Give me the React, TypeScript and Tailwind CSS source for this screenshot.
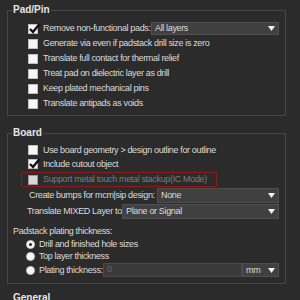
const font = { fontFamily: '"Liberation Sans", Arial, sans-serif' }

function Check({ checked, disabled }: { checked?: boolean; disabled?: boolean }) {
  return (
    <span
      className={`relative inline-block w-[10px] h-[10px] shrink-0 border ${
        disabled ? 'bg-[#d8d8d8] border-[#9a9a9a]' : 'bg-[#f7f7f7] border-[#bdbdbd]'
      }`}
    >
      {checked && (
        <svg className="absolute -left-[1px] -top-[3px]" width="13" height="13" viewBox="0 0 13 13">
          <path d="M2 7 L5 10 L11.5 2" fill="none" stroke="#111" strokeWidth="2.4" />
        </svg>
      )}
    </span>
  )
}

function Radio({ selected }: { selected?: boolean }) {
  return (
    <span className="w-[9px] h-[9px] rounded-full bg-[#f7f7f7] border border-[#c8c8c8] flex items-center justify-center shrink-0">
      {selected && <span className="w-[3px] h-[3px] rounded-full bg-[#222]" />}
    </span>
  )
}

function Arrow() {
  return (
    <svg width="7" height="5" viewBox="0 0 7 5" className="shrink-0">
      <path d="M0 0 H7 L3.5 5 Z" fill="#f2f2f2" />
    </svg>
  )
}

function Drop({ value, className }: { value: string; className: string }) {
  return (
    <div
      className={`shrink-0 flex items-center justify-between bg-[#404040] border border-[#4f4f4f] pl-[3px] pr-[3px] text-[#dcdcdc] ${className}`}
    >
      <span className="leading-none">{value}</span>
      <Arrow />
    </div>
  )
}

function CheckRow({ label, checked }: { label: string; checked?: boolean }) {
  return (
    <div className="h-[15px] flex items-center gap-[5px]">
      <Check checked={checked} />
      <span className="leading-none whitespace-nowrap">{label}</span>
    </div>
  )
}

export default function App() {
  return (
    <div
      className="w-[300px] h-[300px] overflow-hidden bg-[#2b2b2b] text-[9px] tracking-[-0.35px] text-[#dcdcdc] pl-[7px] pr-[14px] pt-[3px]"
      style={font}
    >
      <fieldset className="min-w-0 border border-[#474747] pl-[20px] pr-[6px] pt-[4px] pb-[4px]">
        <legend className="-ml-[16px] px-[1px] font-bold text-[10px] tracking-normal leading-[14px] text-[#e6e6e6]">
          Pad/Pin
        </legend>
        <div className="h-[15px] flex items-center gap-[5px]">
          <Check checked />
          <span className="min-w-0 leading-none whitespace-nowrap">Remove non-functional pads:</span>
          <Drop value="All layers" className="ml-auto w-[128px] h-[13px]" />
        </div>
        <CheckRow label="Generate via even if padstack drill size is zero" />
        <CheckRow label="Translate full contact for thermal relief" />
        <CheckRow label="Treat pad on dielectric layer as drill" />
        <CheckRow label="Keep plated mechanical pins" />
        <CheckRow label="Translate antipads as voids" />
      </fieldset>

      <fieldset className="min-w-0 mt-[10px] border border-[#474747] pl-[20px] pr-[6px] pt-[3px] pb-[6px]">
        <legend className="-ml-[16px] px-[1px] font-bold text-[10px] tracking-normal leading-[14px] text-[#e6e6e6]">
          Board
        </legend>
        <div className="h-[14px] flex items-center gap-[5px]">
          <Check />
          <span className="leading-none whitespace-nowrap">Use board geometry &gt; design outline for outline</span>
        </div>
        <div className="h-[14px] flex items-center gap-[5px]">
          <Check checked />
          <span className="leading-none whitespace-nowrap">Include cutout object</span>
        </div>
        <div className="mt-[1px] -ml-[7px] w-[196px] h-[15px] border border-[#8a1c1c] pl-[6px] flex items-center gap-[5px]">
          <Check disabled />
          <span className="leading-none whitespace-nowrap text-[#7c7c7c]">Support metal touch metal stackup(IC Mode)</span>
        </div>
        <div className="mt-[1px] h-[15px] flex items-center">
          <span className="min-w-0 ml-[1px] leading-none whitespace-nowrap">Create bumps for mcm|sip design:</span>
          <Drop value="None" className="ml-auto w-[122px] h-[15px]" />
        </div>
        <div className="mt-[1px] h-[15px] flex items-center">
          <span className="min-w-0 -ml-[1px] leading-none whitespace-nowrap">Translate MIXED Layer to:</span>
          <Drop value="Plane or Signal" className="ml-auto w-[157px] h-[15px]" />
        </div>
        <div className="mt-[6px] -ml-[15px] h-[13px] flex items-center">
          <span className="leading-none whitespace-nowrap">Padstack plating thickness:</span>
        </div>
        <div className="h-[12px] flex items-center gap-[4px] -ml-[2px]">
          <Radio selected />
          <span className="leading-none whitespace-nowrap">Drill and finished hole sizes</span>
        </div>
        <div className="h-[13px] flex items-center gap-[4px] -ml-[2px]">
          <Radio />
          <span className="leading-none whitespace-nowrap">Top layer thickness</span>
        </div>
        <div className="h-[14px] flex items-center gap-[4px] -ml-[2px]">
          <Radio />
          <span className="min-w-0 leading-none whitespace-nowrap">Plating thickness:</span>
          <div className="ml-auto shrink-0 flex h-[14px]">
            <div className="w-[139px] h-full bg-[#3a3a3a] border border-[#4a4a4a] flex items-center pl-[3px] text-[#6a6a6a]">
              0
            </div>
            <Drop value="mm" className="w-[37px] h-full text-[#c9c9d6]" />
          </div>
        </div>
      </fieldset>

      <div className="mt-[7px] ml-[6px] font-bold text-[10px] tracking-normal leading-[14px] text-[#e6e6e6]">General</div>
    </div>
  )
}
